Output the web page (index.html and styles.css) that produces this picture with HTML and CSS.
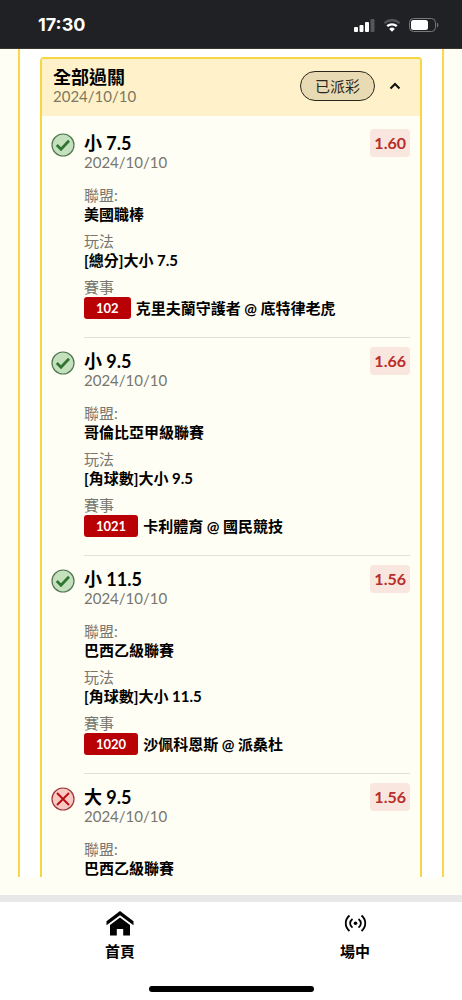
FILE: index.html
```html
<!DOCTYPE html>
<html lang="zh-Hant">
<head>
<meta charset="utf-8">
<meta name="viewport" content="width=device-width, initial-scale=1">
<title>全部過關</title>
<link rel="stylesheet" href="styles.css">
</head>
<body>
<svg class="sprite" aria-hidden="true">
  <symbol id="win" viewBox="0 0 24 24"><circle cx="12" cy="12" r="11" fill="#c5e0bd" stroke="#4f7650" stroke-width="1.2"/><path d="M5.800 12l4.200 4.200 8-8.400" fill="none" stroke="#2f7430" stroke-width="2.700"/></symbol>
  <symbol id="lose" viewBox="0 0 24 24"><circle cx="12" cy="12" r="11" fill="#f9c8c3" stroke="#9d3436" stroke-width="1.2"/><path d="M6 6l12 12M18 6L6 18" fill="none" stroke="#b80c12" stroke-width="1.9"/></symbol>
</svg>
<div class="screen">
  <header class="status">
    <time class="clock">17:30</time>
    <div class="indicators">
      <svg width="21" height="14" viewBox="0 0 21 14"><rect x="0" y="9" width="4" height="5" rx="1" fill="#fff"/><rect x="5.5" y="7" width="4" height="7" rx="1" fill="#fff"/><rect x="11" y="4" width="4" height="10" rx="1" fill="#fff"/><rect x="16.5" y="1" width="4" height="13" rx="1" fill="#55565a"/></svg>
      <svg width="18" height="14" viewBox="0 0 18 14"><path d="M1.5 5.2a10.8 10.8 0 0 1 15 0" fill="none" stroke="#55565a" stroke-width="2.2"/><path d="M4.2 8.2a7 7 0 0 1 9.6 0" fill="none" stroke="#fff" stroke-width="2.3"/><path d="M9 13.8l-2.8-2.9a4 4 0 0 1 5.6 0z" fill="#fff"/></svg>
      <svg width="30" height="14" viewBox="0 0 30 14"><rect x=".5" y=".5" width="26" height="13" rx="4" fill="none" stroke="#77787b"/><rect x="2" y="2" width="17" height="10" rx="2.5" fill="#fff"/><path d="M28 4.5c1.800 .8 1.800 4.200 0 5z" fill="#77787b"/></svg>
    </div>
  </header>

  <main class="content">
    <div class="frame">
      <section class="card">
        <div class="card-head">
          <div class="heading">
            <h1 class="title">全部過關</h1>
            <time class="date">2024/10/10</time>
          </div>
          <span class="pill">已派彩</span>
          <button class="toggle" type="button" aria-label="收合" aria-expanded="true"><svg width="12" height="8" viewBox="0 0 12 8"><path d="M1.500 6.500L6 2l4.500 4.500" fill="none" stroke="#111" stroke-width="2.100"/></svg></button>
        </div>
        <div class="bets">
          <article class="bet">
            <svg class="result"><use href="#win"/></svg>
            <div class="detail">
              <div class="bet-head"><div class="heading"><h2 class="title">小 7.5</h2><time class="date">2024/10/10</time></div><span class="odds">1.60</span></div>
              <dl class="facts">
                <div><dt>聯盟:</dt><dd>美國職棒</dd></div>
                <div><dt>玩法</dt><dd>[總分]大小 7.5</dd></div>
                <div><dt>賽事</dt><dd class="match"><span class="code">102</span>克里夫蘭守護者 @ 底特律老虎</dd></div>
              </dl>
            </div>
          </article>
          <article class="bet">
            <svg class="result"><use href="#win"/></svg>
            <div class="detail">
              <div class="bet-head"><div class="heading"><h2 class="title">小 9.5</h2><time class="date">2024/10/10</time></div><span class="odds">1.66</span></div>
              <dl class="facts">
                <div><dt>聯盟:</dt><dd>哥倫比亞甲級聯賽</dd></div>
                <div><dt>玩法</dt><dd>[角球數]大小 9.5</dd></div>
                <div><dt>賽事</dt><dd class="match"><span class="code">1021</span>卡利體育 @ 國民競技</dd></div>
              </dl>
            </div>
          </article>
          <article class="bet">
            <svg class="result"><use href="#win"/></svg>
            <div class="detail">
              <div class="bet-head"><div class="heading"><h2 class="title">小 11.5</h2><time class="date">2024/10/10</time></div><span class="odds">1.56</span></div>
              <dl class="facts">
                <div><dt>聯盟:</dt><dd>巴西乙級聯賽</dd></div>
                <div><dt>玩法</dt><dd>[角球數]大小 11.5</dd></div>
                <div><dt>賽事</dt><dd class="match"><span class="code">1020</span>沙佩科恩斯 @ 派桑杜</dd></div>
              </dl>
            </div>
          </article>
          <article class="bet">
            <svg class="result"><use href="#lose"/></svg>
            <div class="detail">
              <div class="bet-head"><div class="heading"><h2 class="title">大 9.5</h2><time class="date">2024/10/10</time></div><span class="odds">1.56</span></div>
              <dl class="facts">
                <div><dt>聯盟:</dt><dd>巴西乙級聯賽</dd></div>
              </dl>
            </div>
          </article>
        </div>
      </section>
    </div>
  </main>

  <footer class="bottom">
    <nav class="tabs">
      <a class="tab" href="#home"><svg width="28" height="26" viewBox="0 0 28 26"><path d="M14 1L.5 11.200v4L14 5.200l13.500 10v-4z"/><path d="M14 7.500L4 15v10.500h6.800V19h6.400v6.500H24V15z"/></svg><span>首頁</span></a>
      <a class="tab" href="#live"><svg width="28" height="26" viewBox="0 0 28 26"><g fill="none" stroke="#000" stroke-width="1.800"><path d="M8.500 5.500c-5 4.300-5 11.200 0 15.500M20.500 5.500c5 4.300 5 11.200 0 15.500M11.500 9c-3.200 2.500-3.200 6.100 0 8.600M17.500 9c3.200 2.500 3.200 6.100 0 8.600"/></g><circle cx="14.500" cy="13.300" r="1.800"/></svg><span>場中</span></a>
    </nav>
    <div class="indicator"></div>
  </footer>
</div>
</body>
</html>
```
FILE: styles.css
```css
* { box-sizing: border-box; }

body {
  margin: 0;
  background: #fffef5;
  color: #000;
  font: 15px/18px Lato, "Noto Sans CJK TC", sans-serif;
}

.sprite { display: none; }

.screen {
  display: flex;
  flex-direction: column;
  height: 100vh;
}

.status {
  flex: none;
  display: flex;
  align-items: center;
  justify-content: space-between;
  height: 49px;
  padding: 2px 23px 0 38px;
  border-bottom: 1px solid #38352f;
  background: #202124;
  color: #fff;
}

.clock { font: 700 18px/20px Inter, sans-serif; }

.indicators { display: flex; gap: 8px; }

.content {
  flex: 1;
  min-height: 0;
  overflow: hidden;
  padding: 0 18px;
  margin-bottom: 18px;
}

.frame {
  padding: 8px 20px 0;
  border: solid #fcd64a;
  border-width: 0 2px;
  background: #fff;
}

.card {
  border: 2px solid #f6d743;
  border-radius: 4px;
  background: #fffef5;
}

.card-head {
  display: flex;
  align-items: center;
  height: 57px;
  padding: 0 19px 4px 11px;
  background: #fff2cb;
}

.heading { flex: 1; }

.title {
  margin: 0;
  font-size: 18px;
  line-height: 20px;
  font-weight: 700;
}

.date {
  display: block;
  color: #77766f;
}

.card-head .date { color: #7e775f; }

.pill {
  padding: 5px 14px;
  border: 1px solid #29261d;
  border-radius: 15px;
  background: #e8dbb3;
  color: #29261d;
}

.toggle {
  display: flex;
  margin-left: 14px;
  padding: 0;
  border: 0;
  background: none;
}

.bets { padding: 4px 10px 0 9px; }

.bet { display: flex; gap: 9px; }

.result {
  flex: none;
  width: 24px;
  height: 24px;
  margin-top: 13px;
}

.detail {
  flex: 1;
  padding: 9px 0 18px;
  border-bottom: 1px solid #e2e1d9;
}

.bet:last-child .detail { border: 0; }

.bet-head {
  display: flex;
  align-items: flex-start;
}

.bet-head .heading { padding-top: 4px; }

.odds {
  padding: 4px;
  border-radius: 4px;
  background: #f9e6de;
  color: #b72e2a;
  font-weight: 700;
  font-size: 16px;
  line-height: 20px;
}

.facts {
  display: grid;
  gap: 8px;
  margin: 14px 0 0;
}

dt {
  color: #77766f;
  line-height: 20px;
}

dd { margin: 0; font-weight: 700; }

.match {
  display: flex;
  align-items: center;
  gap: 5px;
  white-space: nowrap;
}

.code {
  padding: 2px 12px;
  border-radius: 3px;
  background: #b90005;
  color: #fff;
  font-size: 13px;
}

.bottom {
  flex: none;
  height: 105px;
  border-top: 7px solid #e8e8e8;
  background: #fff;
}

.tabs {
  display: flex;
  justify-content: space-between;
  padding: 8px 92px 0 105px;
}

.tab {
  display: flex;
  flex-direction: column;
  align-items: center;
  gap: 6px;
  color: #000;
  text-decoration: none;
  font-weight: 700;
}

.indicator {
  width: 165px;
  height: 6px;
  margin: 26px auto 0;
  border-radius: 3px;
  background: #000;
}
```
